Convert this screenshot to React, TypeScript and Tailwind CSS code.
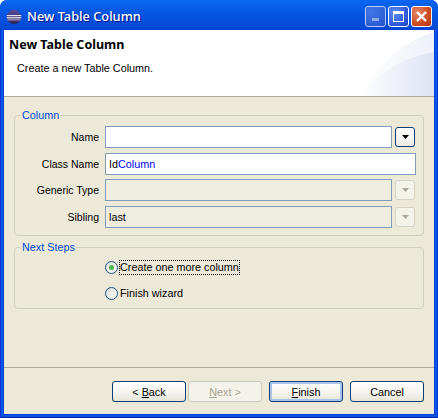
const font = "font-['Liberation_Sans',sans-serif]";

function EclipseIcon() {
  return (
    <svg width="16" height="16" viewBox="0 0 16 16" className="shrink-0 mt-[1px]">
      <defs>
        <linearGradient id="ball" x1="0" y1="0" x2="0" y2="1">
          <stop offset="0" stopColor="#5a4c9c" />
          <stop offset="1" stopColor="#2c2255" />
        </linearGradient>
      </defs>
      <circle cx="8" cy="8" r="7.2" fill="url(#ball)" />
      <rect x="0.8" y="6" width="14.4" height="1.2" fill="#e6e3f4" />
      <rect x="0.8" y="8.2" width="14.4" height="1.2" fill="#f4f1fa" />
      <rect x="1.5" y="10.4" width="13" height="1" fill="#b9b2da" />
    </svg>
  );
}

function HeaderSwoosh() {
  return (
    <svg width="74" height="66" viewBox="0 0 74 66" className="absolute right-0 bottom-0">
      <defs>
        <linearGradient id="swoosh" x1="0" y1="0" x2="1" y2="0">
          <stop offset="0" stopColor="#ffffff" />
          <stop offset="1" stopColor="#dde3f3" />
        </linearGradient>
      </defs>
      <path d="M0 66 Q28 16 74 2 V66 Z" fill="url(#swoosh)" opacity="0.5" />
      <path d="M0 66 Q28 30 74 22 V66 Z" fill="url(#swoosh)" />
    </svg>
  );
}

function WindowButton({ kind }: { kind: 'min' | 'max' | 'close' }) {
  const look =
    kind === 'close'
      ? 'bg-[radial-gradient(circle_at_30%_30%,#e58a6c,#cf4a23_60%,#b2320f)]'
      : kind === 'max'
        ? 'bg-[radial-gradient(circle_at_30%_30%,#5f8bf0,#2a56d8_70%,#1f46c4)]'
        : 'bg-[radial-gradient(circle_at_30%_30%,#5f84e8,#3f64d0_70%,#3558c8)] opacity-70';
  return (
    <div className={`w-[21px] h-[21px] rounded-[3px] border border-white flex items-center justify-center ${look}`}>
      {kind === 'min' && <div className="w-[7px] h-[3px] mt-[6px] bg-white opacity-70" />}
      {kind === 'max' && (
        <div className="w-[11px] h-[11px] border border-white border-t-[3px]" />
      )}
      {kind === 'close' && (
        <svg width="13" height="13" viewBox="0 0 13 13">
          <path d="M2 2 L11 11 M11 2 L2 11" stroke="#fff" strokeWidth="2.4" />
        </svg>
      )}
    </div>
  );
}

function Arrow({ disabled }: { disabled?: boolean }) {
  return (
    <svg width="7" height="4" viewBox="0 0 7 4">
      <path d="M0 0 H7 L3.5 4 Z" fill={disabled ? '#aca899' : '#000'} />
    </svg>
  );
}

function ComboButton({ disabled }: { disabled?: boolean }) {
  return (
    <div
      className={
        disabled
          ? 'w-[20px] h-[20px] rounded-[3px] border border-[#d5d2c3] bg-[#f4f3ea] flex items-center justify-center'
          : 'w-[20px] h-[20px] rounded-[3px] border border-[#003c74] bg-gradient-to-b from-white to-[#ecebe5] flex items-center justify-center'
      }
    >
      <Arrow disabled={disabled} />
    </div>
  );
}

function Row({ label, className, children }: { label: string; className?: string; children: React.ReactNode }) {
  return (
    <div className={`flex items-center h-[22px] ${className ?? ''}`}>
      <div className="w-[84px] text-right leading-none text-[10.5px]">{label}</div>
      <div className="ml-[6px] flex-1 flex items-center">{children}</div>
    </div>
  );
}

function Input({ value, disabled, wide }: { value?: React.ReactNode; disabled?: boolean; wide?: boolean }) {
  return (
    <div
      className={`h-[22px] border border-[#7f9db9] flex items-center px-[3px] ${wide ? 'w-[311px]' : 'w-[287px]'} ${disabled ? 'bg-[#efede0]' : 'bg-white'}`}
    >
      {value}
    </div>
  );
}

function Radio({ checked }: { checked?: boolean }) {
  return (
    <div className="w-[13px] h-[13px] rounded-full border border-[#1c5180] bg-gradient-to-br from-[#dcdcd7] to-white flex items-center justify-center shrink-0">
      {checked && <div className="w-[5px] h-[5px] rounded-full bg-[#4db74a]" />}
    </div>
  );
}

function WizButton({ children, disabled, focused }: { children: React.ReactNode; disabled?: boolean; focused?: boolean }) {
  return (
    <div
      className={`w-[74px] h-[21px] pt-[1px] rounded-[3px] border flex items-center justify-center ${
        disabled
          ? 'border-[#cac8bb] bg-[#f4f3ea] text-[#a5a293]'
          : 'border-[#003c74] bg-gradient-to-b from-white via-[#f7f6f1] to-[#e6e4d8] text-black'
      } ${focused ? 'shadow-[inset_0_0_0_2px_#a9c4ea]' : ''}`}
    >
      <span>{children}</span>
    </div>
  );
}

export default function App() {
  return (
    <div className={`${font} w-[438px] h-[418px] flex flex-col overflow-hidden bg-[#0856e6] rounded-t-[7px] text-[10.8px] text-black`}>
      {/* Title bar */}
      <div className="h-[30px] shrink-0 flex items-center pt-[2px] pl-[6px] pr-[6px] gap-[5px] bg-gradient-to-b from-[#0a66f0] via-[#0554e2] to-[#0348d2]">
        <EclipseIcon />
        <div className="flex-1 mt-[1px] text-white text-[12.8px] font-medium font-['Noto_Sans',sans-serif] [text-shadow:1px_1px_1px_#0f1089]">New Table Column</div>
        <div className="flex gap-[2px]">
          <WindowButton kind="min" />
          <WindowButton kind="max" />
          <WindowButton kind="close" />
        </div>
      </div>

      <div className="flex-1 flex flex-col px-[4px] pb-[4px] shadow-[inset_1px_0_#0831d9,inset_-1px_0_#0831d9,inset_0_-1px_#001ea0]">
        <div className="flex-1 flex flex-col bg-[#ece9d8] shadow-[0_0_0_1px_#0a3fd8]">
          {/* Header */}
          <div className="relative h-[67px] shrink-0 border-b border-[#aca899] bg-white pl-[5px] pt-[6px]">
            <HeaderSwoosh />
            <div className="relative font-bold text-[12.5px] leading-[18px] font-['Noto_Sans',sans-serif]">New Table Column</div>
            <div className="relative pl-[8px] mt-[6px] leading-[16px]">Create a new Table Column.</div>
          </div>

          {/* Column group */}
          <fieldset className="mt-[11px] mx-[10px] h-[128px] border border-[#d0d0bf] rounded-[4px] pl-[6px]">
            <legend className="px-[1px] text-[#0046d5] leading-[14px]">Column</legend>
            <div className="-ml-[6px] mt-[4px] flex flex-col">
              <Row label="Name">
                <Input />
                <div className="ml-[3px]"><ComboButton /></div>
              </Row>
              <Row label="Class Name" className="mt-[5px]">
                <Input wide value={<span>Id<span className="text-[#0000ff]">Column</span></span>} />
              </Row>
              <Row label="Generic Type" className="mt-[4px]">
                <Input disabled />
                <div className="ml-[3px]"><ComboButton disabled /></div>
              </Row>
              <Row label="Sibling" className="mt-[5px]">
                <Input disabled value="last" />
                <div className="ml-[3px]"><ComboButton disabled /></div>
              </Row>
            </div>
          </fieldset>

          {/* Next Steps group */}
          <fieldset className="mt-[4px] mx-[10px] h-[69px] border border-[#d0d0bf] rounded-[4px] pl-[6px]">
            <legend className="px-[1px] text-[#0046d5] leading-[14px]">Next Steps</legend>
            <div className="pl-[84px] mt-[7px] flex flex-col gap-[13px]">
              <div className="flex items-center gap-[2px] h-[13px]">
                <Radio checked />
                <span className="leading-[13px] outline-1 outline-dotted outline-black">Create one more column</span>
              </div>
              <div className="flex items-center gap-[2px] h-[13px]">
                <Radio />
                <span className="leading-[13px]">Finish wizard</span>
              </div>
            </div>
          </fieldset>

          {/* Footer */}
          <div className="mt-auto h-[47px] border-t border-[#aca899] flex items-start justify-end pt-[13px] pr-[10px]">
            <WizButton><span>&lt; <u>B</u>ack</span></WizButton>
            <div className="ml-[2px]"><WizButton disabled><span><u>N</u>ext &gt;</span></WizButton></div>
            <div className="ml-[7px]"><WizButton focused><span><u>F</u>inish</span></WizButton></div>
            <div className="ml-[7px]"><WizButton>Cancel</WizButton></div>
          </div>
        </div>
      </div>
    </div>
  );
}
